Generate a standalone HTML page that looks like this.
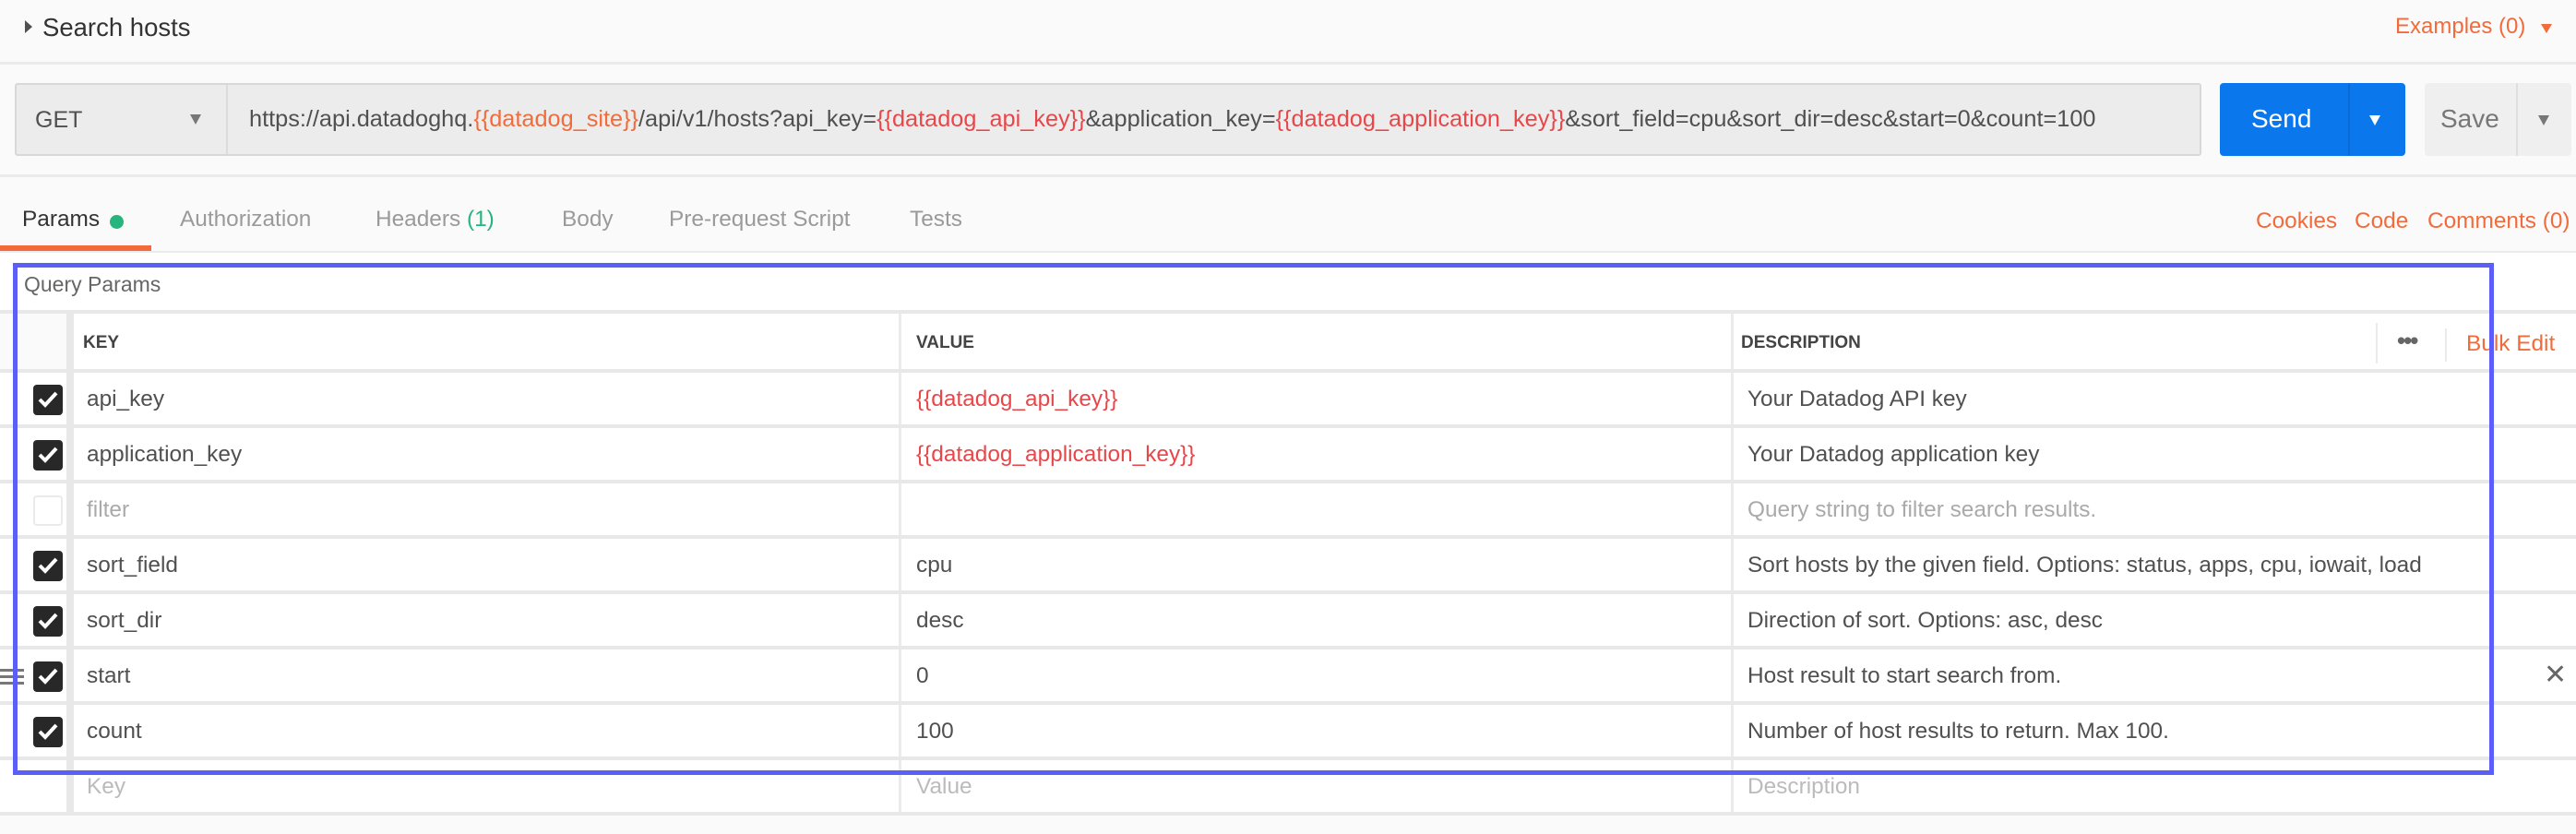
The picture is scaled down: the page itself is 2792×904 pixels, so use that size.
<!DOCTYPE html>
<html><head><meta charset="utf-8"><style>
*{margin:0;padding:0;box-sizing:border-box}
body{width:2792px;height:904px;background:#fafafa;font-family:"Liberation Sans",sans-serif;color:#505050;position:relative;overflow:hidden}
.a{position:absolute;white-space:nowrap}
.or{color:#f26b3a}.rd{color:#e8474a}
.hl{position:absolute;left:0;width:2792px;height:4px;background:#e8e8e8}
.cb{position:absolute;left:36px;width:32px;height:33px;background:#282828;border-radius:4px}
.cb svg{position:absolute;left:5px;top:6px}
.t{font-size:24.4px}
</style></head><body>
<div class="a" style="left:27px;top:22px;width:0;height:0;border-left:8px solid #505050;border-top:7px solid transparent;border-bottom:7px solid transparent"></div>
<div class="a" style="left:46px;top:14px;font-size:27.5px;color:#333">Search hosts</div>
<div class="a or" style="left:2596px;top:15px;font-size:24px">Examples (0)</div>
<div class="a" style="left:2754px;top:26px;border-top:10px solid #f26b3a;border-left:6px solid transparent;border-right:6px solid transparent"></div>
<div class="hl" style="top:67px;height:3px;background:#ebebeb"></div>
<div class="a" style="left:16px;top:90px;width:2370px;height:79px;background:#ececec;border:2px solid #d8d8d8;border-radius:3px"></div>
<div class="a" style="left:245px;top:92px;width:2px;height:75px;background:#dcdcdc"></div>
<div class="a" style="left:38px;top:116px;font-size:25px">GET</div>
<div class="a" style="left:206px;top:124px;border-top:11px solid #777;border-left:6px solid transparent;border-right:6px solid transparent"></div>
<div class="a" style="left:270px;top:115px;font-size:25.3px">https://api.datadoghq.<span class="or">{{datadog_site}}</span>/api/v1/hosts?api_key=<span class="rd">{{datadog_api_key}}</span>&amp;application_key=<span class="rd">{{datadog_application_key}}</span>&amp;sort_field=cpu&amp;sort_dir=desc&amp;start=0&amp;count=100</div>
<div class="a" style="left:2406px;top:90px;width:201px;height:79px;background:#0a78ec;border-radius:4px"></div>
<div class="a" style="left:2545px;top:90px;width:2px;height:79px;background:#0a6bd4"></div>
<div class="a" style="left:2440px;top:113px;font-size:28px;color:#fff">Send</div>
<div class="a" style="left:2568px;top:125px;border-top:11px solid #fff;border-left:6px solid transparent;border-right:6px solid transparent"></div>
<div class="a" style="left:2628px;top:90px;width:159px;height:79px;background:#efefef;border-radius:4px"></div>
<div class="a" style="left:2727px;top:90px;width:2px;height:79px;background:#e0e0e0"></div>
<div class="a" style="left:2645px;top:113px;font-size:28px;color:#777">Save</div>
<div class="a" style="left:2751px;top:125px;border-top:11px solid #777;border-left:6px solid transparent;border-right:6px solid transparent"></div>
<div class="hl" style="top:189px;height:3px;background:#ebebeb"></div>
<div class="a t" style="left:24px;top:224px;color:#333">Params</div>
<div class="a" style="left:119px;top:233px;width:15px;height:15px;border-radius:50%;background:#26b47f"></div>
<div class="a t" style="left:195px;top:224px;color:#9a9a9a">Authorization</div>
<div class="a t" style="left:407px;top:224px;color:#9a9a9a">Headers <span style="color:#26b47f">(1)</span></div>
<div class="a t" style="left:609px;top:224px;color:#9a9a9a">Body</div>
<div class="a t" style="left:725px;top:224px;color:#9a9a9a">Pre-request Script</div>
<div class="a t" style="left:986px;top:224px;color:#9a9a9a">Tests</div>
<div class="a t or" style="left:2445px;top:226px">Cookies</div>
<div class="a t or" style="left:2552px;top:226px">Code</div>
<div class="a t or" style="left:2631px;top:226px">Comments (0)</div>
<div class="a" style="left:0;top:266px;width:164px;height:6px;background:#f26b3a"></div>
<div class="hl" style="top:272px;height:2px;background:#ebebeb"></div>
<div class="a" style="left:0;top:274px;width:2792px;height:608px;background:#fff"></div>
<div class="a" style="left:26px;top:295px;font-size:23px;color:#666">Query Params</div>
<div class="hl" style="top:336px"></div>
<div class="a" style="left:72px;top:340px;width:8px;height:542px;background:#e8e8e8"></div>
<div class="a" style="left:0;top:340px;width:72px;height:64px;background:#fafafa"></div>
<div class="a" style="left:974px;top:340px;width:3px;height:542px;background:#ebebeb"></div>
<div class="a" style="left:1876px;top:340px;width:3px;height:542px;background:#ebebeb"></div>
<div class="a" style="left:2575px;top:350px;width:2px;height:44px;background:#ebebeb"></div>
<div class="a" style="left:2650px;top:356px;width:2px;height:36px;background:#ebebeb"></div>
<div class="a" style="left:90px;top:361px;font-size:19px;font-weight:bold;color:#444">KEY</div>
<div class="a" style="left:993px;top:361px;font-size:19px;font-weight:bold;color:#444">VALUE</div>
<div class="a" style="left:1887px;top:361px;font-size:19px;font-weight:bold;color:#444">DESCRIPTION</div>
<div class="a" style="left:2598px;top:354px;font-size:26px;font-weight:bold;color:#666;letter-spacing:-2px">•••</div>
<div class="a t or" style="left:2673px;top:359px">Bulk Edit</div>
<div class="hl" style="top:400px"></div>
<div class="hl" style="top:460px"></div>
<div class="hl" style="top:520px"></div>
<div class="hl" style="top:580px"></div>
<div class="hl" style="top:640px"></div>
<div class="hl" style="top:700px"></div>
<div class="hl" style="top:760px"></div>
<div class="hl" style="top:820px"></div>
<div class="hl" style="top:880px"></div>
<div class="cb" style="top:417px"><svg width="22" height="20" viewBox="0 0 22 20"><path d="M2 10 L8 16 L20 3" stroke="#fff" stroke-width="4" fill="none"/></svg></div>
<div class="a t" style="left:94px;top:419px">api_key</div>
<div class="a t rd" style="left:993px;top:419px">{{datadog_api_key}}</div>
<div class="a t" style="left:1894px;top:419px">Your Datadog API key</div>
<div class="cb" style="top:477px"><svg width="22" height="20" viewBox="0 0 22 20"><path d="M2 10 L8 16 L20 3" stroke="#fff" stroke-width="4" fill="none"/></svg></div>
<div class="a t" style="left:94px;top:479px">application_key</div>
<div class="a t rd" style="left:993px;top:479px">{{datadog_application_key}}</div>
<div class="a t" style="left:1894px;top:479px">Your Datadog application key</div>
<div class="cb" style="top:537px;background:#fff;border:2px solid #eaeaea"></div>
<div class="a t" style="left:94px;top:539px;color:#aaa">filter</div>
<div class="a t" style="left:1894px;top:539px;color:#aaa">Query string to filter search results.</div>
<div class="cb" style="top:597px"><svg width="22" height="20" viewBox="0 0 22 20"><path d="M2 10 L8 16 L20 3" stroke="#fff" stroke-width="4" fill="none"/></svg></div>
<div class="a t" style="left:94px;top:599px">sort_field</div>
<div class="a t" style="left:993px;top:599px">cpu</div>
<div class="a t" style="left:1894px;top:599px">Sort hosts by the given field. Options: status, apps, cpu, iowait, load</div>
<div class="cb" style="top:657px"><svg width="22" height="20" viewBox="0 0 22 20"><path d="M2 10 L8 16 L20 3" stroke="#fff" stroke-width="4" fill="none"/></svg></div>
<div class="a t" style="left:94px;top:659px">sort_dir</div>
<div class="a t" style="left:993px;top:659px">desc</div>
<div class="a t" style="left:1894px;top:659px">Direction of sort. Options: asc, desc</div>
<div class="a" style="left:0;top:725px;width:26px;height:3px;background:#777;box-shadow:0 7px 0 #777,0 14px 0 #777"></div>
<div class="cb" style="top:717px"><svg width="22" height="20" viewBox="0 0 22 20"><path d="M2 10 L8 16 L20 3" stroke="#fff" stroke-width="4" fill="none"/></svg></div>
<div class="a t" style="left:94px;top:719px">start</div>
<div class="a t" style="left:993px;top:719px">0</div>
<div class="a t" style="left:1894px;top:719px">Host result to start search from.</div>
<div class="a" style="left:2757px;top:714px;font-size:30px;color:#666">✕</div>
<div class="cb" style="top:777px"><svg width="22" height="20" viewBox="0 0 22 20"><path d="M2 10 L8 16 L20 3" stroke="#fff" stroke-width="4" fill="none"/></svg></div>
<div class="a t" style="left:94px;top:779px">count</div>
<div class="a t" style="left:993px;top:779px">100</div>
<div class="a t" style="left:1894px;top:779px">Number of host results to return. Max 100.</div>
<div class="a t" style="left:94px;top:839px;color:#bbb">Key</div>
<div class="a t" style="left:993px;top:839px;color:#bbb">Value</div>
<div class="a t" style="left:1894px;top:839px;color:#bbb">Description</div>
<div class="a" style="left:14px;top:285px;width:2689px;height:555px;border:5px solid #5b5ff8"></div>
</body></html>
